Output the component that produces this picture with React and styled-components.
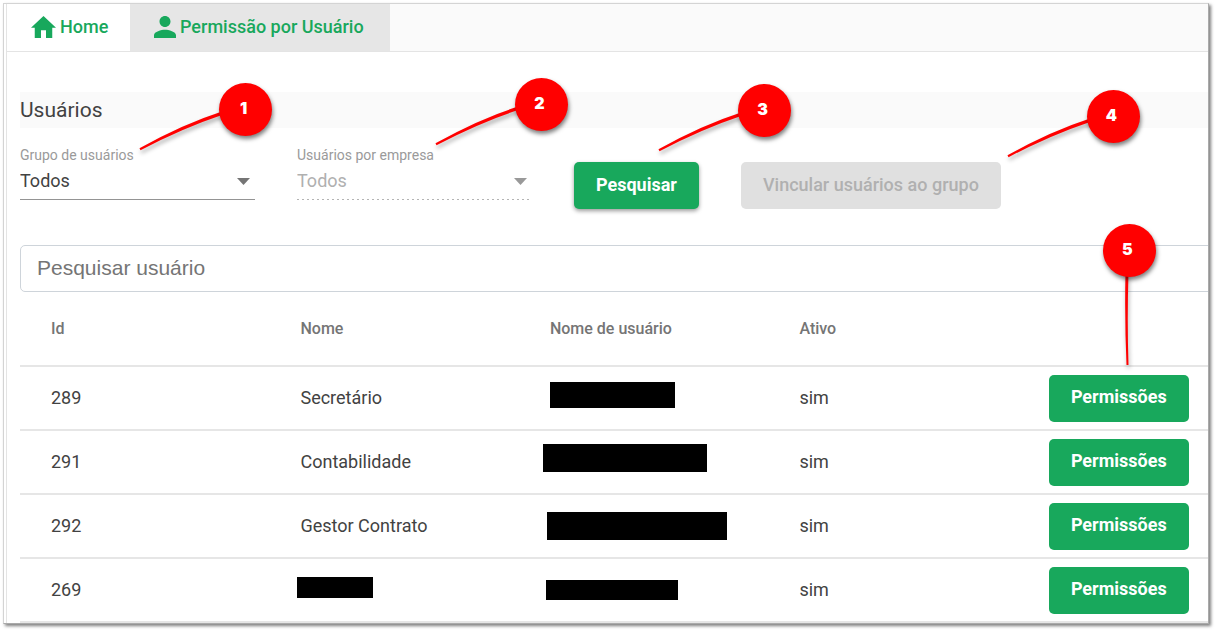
import React from "react";
import styled, { createGlobalStyle } from "styled-components";

const GlobalStyle = createGlobalStyle`
  *, *::before, *::after { box-sizing: border-box; }
  body {
    margin: 0;
    background: #fff;
    color: #424242;
    font-family: Roboto, "Liberation Sans", sans-serif;
    font-size: 18px;
  }
`;

const green = "#18a85c";

const Frame = styled.div`
  margin: 3px 9px 8px 3px;
  padding-left: 2px;
  border: 1px solid #d4d4d4;
  border-right-color: #aaa;
  border-bottom-color: #aaa;
  box-shadow: 2px 2px 3px rgba(0, 0, 0, 0.5);
  overflow: hidden;
`;

const Panel = styled.main`
  border-left: 1px solid #e4e4e4;
  background: #fff;
`;

const TabBar = styled.nav`
  display: flex;
  background: #fafafa;
  border-bottom: 1px solid #e4e4e4;
`;

const Tab = styled.a`
  display: flex;
  align-items: center;
  gap: 4px;
  height: 47px;
  min-width: ${(p) => (p.$active ? 260 : 123)}px;
  padding: 0 21px 2px 24px;
  background: ${(p) => (p.$active ? "#e6e6e6" : "#fff")};
  color: ${green};
  font-weight: 500;
  font-size: 18px;
  line-height: 24px;
  text-decoration: none;
`;

const TabIcon = styled.svg`
  flex: none;
  width: ${(p) => p.$width}px;
  height: 22px;
  fill: ${green};
`;

const Content = styled.section`
  padding: 40px 0 0 13px;
`;

const Title = styled.h1`
  margin: 0;
  background: #fafafa;
  font-size: 21px;
  font-weight: 400;
  line-height: 36px;
`;

const Filters = styled.form`
  display: flex;
  flex-wrap: wrap;
  gap: 42px;
  padding: 18px 0 45px;
`;

const Anchor = styled.div`
  position: relative;
`;

const Field = styled(Anchor)`
  width: 235px;
`;

const Label = styled.label`
  display: block;
  color: #9a9a9a;
  font-size: 14px;
  line-height: 18px;
`;

const SelectBox = styled.div`
  display: grid;
  align-items: center;
  height: 36px;
  padding-bottom: 2px;
  background: ${(p) =>
    p.$disabled
      ? "repeating-linear-gradient(90deg, #b4b4b4 0 2px, transparent 2px 5px) left bottom / 100% 1px no-repeat"
      : "linear-gradient(#949494, #949494) left bottom / 100% 1px no-repeat"};
  > * { grid-area: 1 / 1; }
`;

const Select = styled.select`
  width: 100%;
  height: 34px;
  padding: 0;
  border: 0;
  appearance: none;
  background: transparent;
  color: #424242;
  font: 400 18px/24px Roboto, sans-serif;
  &:disabled { color: #b0b0b0; opacity: 1; }
`;

const Caret = styled.svg`
  justify-self: end;
  width: 13px;
  height: 7px;
  margin-right: 5px;
  fill: ${(p) => (p.$disabled ? "#999" : "#757575")};
  pointer-events: none;
`;

const Button = styled.button`
  height: 47px;
  padding: 0 22px 2px;
  border: 0;
  border-radius: 5px;
  background: ${green};
  color: #fff;
  font: 700 18px/24px Roboto, sans-serif;
  white-space: nowrap;
  box-shadow: ${(p) => (p.$raised ? "0 2px 4px rgba(0, 0, 0, 0.4)" : "none")};
  &:disabled { background: #e0e0e0; color: #b0b0b0; font-weight: 500; }
`;

const ButtonSlot = styled(Anchor)`
  align-self: flex-end;
  margin-bottom: -9px;
`;

const Search = styled.input`
  display: block;
  width: calc(100% + 6px);
  height: 47px;
  padding: 0 16px 2px;
  border: 1px solid #ced4da;
  border-radius: 5px;
  background: #fff;
  font: 21px/24px "Liberation Sans", Arial, sans-serif;
  &::placeholder { color: #757575; opacity: 1; }
`;

const Table = styled.table`
  width: 100%;
  table-layout: fixed;
  border-collapse: separate;
  border-spacing: 0;
`;

const HeadCell = styled.th`
  width: ${(p) => (p.$last ? "auto" : "21%")};
  height: 75px;
  padding: 0 0 0 31px;
  border-bottom: 2px solid #e6e6e6;
  color: #757575;
  font-size: 16px;
  font-weight: 500;
  line-height: 20px;
  text-align: left;
`;

const Cell = styled.td`
  position: relative;
  height: 64px;
  padding: 0 0 0 31px;
  border-bottom: 2px solid #e6e6e6;
  line-height: 24px;
  white-space: nowrap;
`;

const Redaction = styled.span`
  position: absolute;
  left: ${(p) => p.$box[0]}px;
  top: ${(p) => p.$box[1]}px;
  width: ${(p) => p.$box[2]}px;
  height: ${(p) => p.$box[3]}px;
  background: #000;
`;

const Marker = styled.div`
  position: absolute;
  z-index: 2;
  left: ${(p) => p.$left}px;
  top: ${(p) => p.$top}px;
  pointer-events: none;
`;

const Tail = styled.svg`
  position: absolute;
  left: ${(p) => (p.$down ? 0 : -79)}px;
  top: 0;
  width: 134px;
  height: 150px;
  overflow: visible;
  fill: red;
  filter: drop-shadow(1px 3px 2px rgba(0, 0, 0, 0.35));
`;

const Badge = styled.div`
  position: relative;
  width: 53px;
  height: 53px;
  padding-right: 4px;
  border-radius: 50%;
  background: red;
  color: #fff;
  font: 900 16px/50px Inter, sans-serif;
  text-align: center;
  box-shadow: 1px 3px 4px rgba(0, 0, 0, 0.5);
`;

function Callout({ number, left, top, down }) {
  return (
    <Marker $left={left} $top={top}>
      <Tail $down={down} viewBox="0 0 134 150" aria-hidden="true">
        {down ? (
          <path d="M22.5 48 Q21.5 96 23.5 141 L25.5 141 Q24 96 25.5 48 Z" />
        ) : (
          <path d="M-.5 65.300 Q43 41 82 28.500 L82 32 Q43 45 .5 67.200 Z" />
        )}
      </Tail>
      <Badge>{number}</Badge>
    </Marker>
  );
}

function SelectField({ id, label, disabled, callout }) {
  return (
    <Field>
      <Label htmlFor={id}>{label}</Label>
      <SelectBox $disabled={disabled}>
        <Select id={id} disabled={disabled} defaultValue="Todos">
          <option>Todos</option>
        </Select>
        <Caret $disabled={disabled} viewBox="0 0 13 7" aria-hidden="true">
          <path d="M0 0h13L6.500 7z" />
        </Caret>
      </SelectBox>
      {callout}
    </Field>
  );
}

/* hidden boxes: left, top, width, height inside the cell */
const rows = [
  { id: 289, name: "Secretário", userBox: [31, 15, 125, 26] },
  { id: 291, name: "Contabilidade", userBox: [24, 13, 164, 28] },
  { id: 292, name: "Gestor Contrato", userBox: [28, 17, 180, 28] },
  { id: 269, nameBox: [28, 18, 76, 21], userBox: [27, 21, 132, 20] },
];

export default function App() {
  return (
    <>
      <GlobalStyle />
      <Frame>
        <Panel>
          <TabBar>
            <Tab href="#home">
              <TabIcon $width={25} viewBox="2 3 20 17" preserveAspectRatio="none" aria-hidden="true">
                <path d="M10 20v-6h4v6h5v-8h3L12 3 2 12h3v8z" />
              </TabIcon>
              Home
            </Tab>
            <Tab href="#permissao" $active>
              <TabIcon $width={22} viewBox="4 4 16 16" aria-hidden="true">
                <path d="M12 12c2.210 0 4-1.790 4-4s-1.790-4-4-4-4 1.790-4 4 1.790 4 4 4zm0 2c-2.670 0-8 1.340-8 4v2h16v-2c0-2.660-5.330-4-8-4z" />
              </TabIcon>
              Permissão por Usuário
            </Tab>
          </TabBar>
          <Content>
            <Title>Usuários</Title>
            <Filters onSubmit={(e) => e.preventDefault()}>
              <SelectField
                id="grupo"
                label="Grupo de usuários"
                callout={<Callout number={1} left={199} top={-63} />}
              />
              <SelectField
                id="empresa"
                label="Usuários por empresa"
                disabled
                callout={<Callout number={2} left={218} top={-68} />}
              />
              <ButtonSlot>
                <Button type="submit" $raised>Pesquisar</Button>
                <Callout number={3} left={164} top={-78} />
              </ButtonSlot>
              <ButtonSlot>
                <Button type="button" disabled>Vincular usuários ao grupo</Button>
                <Callout number={4} left={346} top={-72} />
              </ButtonSlot>
            </Filters>
            <Search type="search" placeholder="Pesquisar usuário" aria-label="Pesquisar usuário" />
            <Table>
              <thead>
                <tr>
                  <HeadCell>Id</HeadCell>
                  <HeadCell>Nome</HeadCell>
                  <HeadCell>Nome de usuário</HeadCell>
                  <HeadCell>Ativo</HeadCell>
                  <HeadCell as="td" $last />
                </tr>
              </thead>
              <tbody>
                {rows.map((row, i) => (
                  <tr key={row.id}>
                    <Cell>{row.id}</Cell>
                    <Cell>{row.name || <Redaction $box={row.nameBox} />}</Cell>
                    <Cell><Redaction $box={row.userBox} /></Cell>
                    <Cell>sim</Cell>
                    <Cell>
                      <Button type="button">Permissões</Button>
                      {i === 0 && <Callout number={5} left={85} top={-143} down />}
                    </Cell>
                  </tr>
                ))}
              </tbody>
            </Table>
          </Content>
        </Panel>
      </Frame>
    </>
  );
}
